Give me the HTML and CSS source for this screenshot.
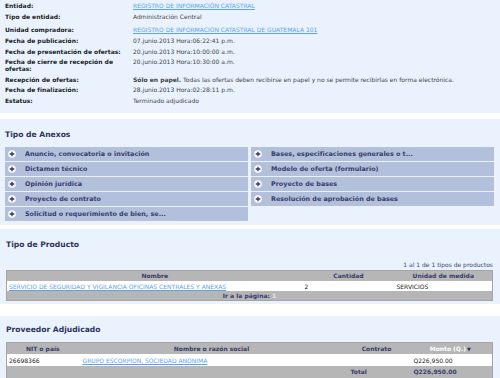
FILE: index.html
```html
<!DOCTYPE html>
<html lang="es">
<head>
    <meta charset="UTF-8">
    <title>Concurso</title>
    <link rel="stylesheet" href="styles.css">
</head>
<body>
    <div class="panel panel-ficha">
        <div class="ficha">
            <div class="lbl">Entidad:</div>
            <div class="val"><a href="#">REGISTRO DE INFORMACIÓN CATASTRAL</a></div>
            <div class="lbl">Tipo de entidad:</div>
            <div class="val">Administración Central</div>
            <div class="lbl alto">Unidad compradora:</div>
            <div class="val alto"><a href="#">REGISTRO DE INFORMACION CATASTRAL DE GUATEMALA 101</a></div>
            <div class="lbl">Fecha de publicación:</div>
            <div class="val">07.junio.2013 Hora:06:22:41 p.m.</div>
            <div class="lbl">Fecha de presentación de ofertas:</div>
            <div class="val">20.junio.2013 Hora:10:00:00 a.m.</div>
            <div class="lbl">Fecha de cierre de recepción de ofertas:</div>
            <div class="val">20.junio.2013 Hora:10:30:00 a.m.</div>
            <div class="lbl">Recepción de ofertas:</div>
            <div class="val"><b>Sólo en papel.</b> Todas las ofertas deben recibirse en papel y no se permite recibirlas en forma electrónica.</div>
            <div class="lbl">Fecha de finalización:</div>
            <div class="val">28.junio.2013 Hora:02:28:11 p.m.</div>
            <div class="lbl">Estatus:</div>
            <div class="val">Terminado adjudicado</div>
        </div>
    </div>

    <div class="panel panel-anexos">
        <h2>Tipo de Anexos</h2>
        <div class="anexos">
            <div class="anexos-col">
                <div class="anexo"><svg viewBox="0 0 8 8"><circle cx="4" cy="4" r="3.8"/><path d="M4 1.7v4.6M1.7 4h4.6"/></svg>Anuncio, convocatoria o invitación</div>
                <div class="anexo"><svg viewBox="0 0 8 8"><circle cx="4" cy="4" r="3.8"/><path d="M4 1.7v4.6M1.7 4h4.6"/></svg>Dictamen técnico</div>
                <div class="anexo"><svg viewBox="0 0 8 8"><circle cx="4" cy="4" r="3.8"/><path d="M4 1.7v4.6M1.7 4h4.6"/></svg>Opinión jurídica</div>
                <div class="anexo"><svg viewBox="0 0 8 8"><circle cx="4" cy="4" r="3.8"/><path d="M4 1.7v4.6M1.7 4h4.6"/></svg>Proyecto de contrato</div>
                <div class="anexo"><svg viewBox="0 0 8 8"><circle cx="4" cy="4" r="3.8"/><path d="M4 1.7v4.6M1.7 4h4.6"/></svg>Solicitud o requerimiento de bien, se...</div>
            </div>
            <div class="anexos-col">
                <div class="anexo"><svg viewBox="0 0 8 8"><circle cx="4" cy="4" r="3.8"/><path d="M4 1.7v4.6M1.7 4h4.6"/></svg>Bases, especificaciones generales o t...</div>
                <div class="anexo"><svg viewBox="0 0 8 8"><circle cx="4" cy="4" r="3.8"/><path d="M4 1.7v4.6M1.7 4h4.6"/></svg>Modelo de oferta (formulario)</div>
                <div class="anexo"><svg viewBox="0 0 8 8"><circle cx="4" cy="4" r="3.8"/><path d="M4 1.7v4.6M1.7 4h4.6"/></svg>Proyecto de bases</div>
                <div class="anexo"><svg viewBox="0 0 8 8"><circle cx="4" cy="4" r="3.8"/><path d="M4 1.7v4.6M1.7 4h4.6"/></svg>Resolución de aprobación de bases</div>
            </div>
        </div>
    </div>

    <div class="panel panel-producto">
        <h2>Tipo de Producto</h2>
        <div class="conteo">1 al 1 de 1 tipos de productos</div>
        <table class="grid grid-producto">
            <colgroup>
                <col style="width:296px">
                <col style="width:92px">
                <col>
            </colgroup>
            <tr class="head">
                <th>Nombre</th>
                <th>Cantidad</th>
                <th>Unidad de medida</th>
            </tr>
            <tr class="fila">
                <td><a href="#">SERVICIO DE SEGURIDAD Y VIGILANCIA OFICINAS CENTRALES Y ANEXAS</a></td>
                <td class="cant">2</td>
                <td class="unidad">SERVICIOS</td>
            </tr>
            <tr class="pie">
                <td colspan="3">Ir a la página: <span class="pag">1</span></td>
            </tr>
        </table>
    </div>

    <div class="panel panel-proveedor">
        <h2>Proveedor Adjudicado</h2>
        <table class="grid grid-proveedor">
            <colgroup>
                <col style="width:72px">
                <col style="width:266px">
                <col style="width:64px">
                <col>
            </colgroup>
            <tr class="head">
                <th>NIT o país</th>
                <th>Nombre o razón social</th>
                <th>Contrato</th>
                <th class="orden">Monto (Q.)<span class="flecha">▼</span></th>
            </tr>
            <tr class="fila">
                <td>26698366</td>
                <td class="razon"><a href="#">GRUPO ESCORPION, SOCIEDAD ANONIMA</a></td>
                <td></td>
                <td class="monto">Q226,950.00</td>
            </tr>
            <tr class="total">
                <td></td>
                <td></td>
                <td class="total-lbl">Total</td>
                <td class="monto">Q226,950.00</td>
            </tr>
        </table>
    </div>
</body>
</html>
```

FILE: styles.css
```css
body {
    margin: 0;
    background-color: #ffffff;
    font-family: "DejaVu Sans", Verdana, sans-serif;
    font-size: 6px;
    color: #222222;
}

a {
    color: #5aa3ea;
}

.panel {
    background-color: #e9f2fd;
}

h2 {
    margin: 0;
    font-size: 7.6px;
    color: #2e3560;
}

/* ficha del concurso */
.panel-ficha {
    padding: 3px 6px 8px 5px;
}

.ficha {
    display: grid;
    grid-template-columns: 128px 1fr;
    row-gap: 4.7px;
    line-height: 6.2px;
}

.lbl {
    font-weight: bold;
    color: #1d1d1d;
    padding-right: 8px;
}

.val {
    color: #444444;
}

.alto {
    padding-top: 2px;
}

/* anexos */
.panel-anexos {
    margin-top: 6px;
    padding: 11px 6px 4px 5px;
}

.anexos {
    display: grid;
    grid-template-columns: 1fr 1fr;
    column-gap: 3px;
    margin-top: 8px;
    align-items: start;
}

.anexos-col {
    display: flex;
    flex-direction: column;
    gap: 1px;
}

.anexo {
    display: flex;
    align-items: center;
    height: 14px;
    background-color: #b3c0db;
    color: #373c6b;
    font-weight: bold;
    font-size: 6.4px;
    padding-left: 3px;
}

.anexo svg {
    width: 8px;
    height: 8px;
    margin-right: 9px;
}

.anexo circle {
    fill: #ffffff;
}

.anexo path {
    stroke: #2e3560;
    stroke-width: 1.3;
}

/* tablas */
.panel-producto {
    margin-top: 4px;
    padding: 11px 7px 3px 6px;
}

.conteo {
    text-align: right;
    color: #3d4676;
    margin-top: 12px;
    margin-bottom: 2px;
}

.grid {
    width: 100%;
    border-collapse: collapse;
    border: 1px solid #a4a4a4;
    table-layout: fixed;
}

.grid th,
.grid td {
    padding: 0 2px;
    white-space: nowrap;
    overflow: hidden;
}

.grid .head {
    background-color: #b6b6b6;
    height: 11px;
}

.grid th {
    color: #373c6b;
    font-weight: bold;
    text-align: center;
}

.grid .fila {
    background-color: #ffffff;
    height: 10px;
}

.grid .pie,
.grid .total {
    background-color: #b6b6b6;
    height: 9px;
}

.pie td {
    text-align: center;
    color: #373c6b;
    font-weight: bold;
}

.pag {
    color: #e6e6e6;
}

.cant {
    text-align: left;
}

.unidad {
    padding-left: 6px;
}

.panel-proveedor {
    margin-top: 12px;
    padding: 9px 7px 0 6px;
}

.grid-proveedor {
    margin-top: 8px;
}

.grid-proveedor .head,
.grid-proveedor .fila,
.grid-proveedor .total {
    height: 12px;
}

.orden {
    color: #ffffff !important;
}

.flecha {
    color: #2e3560;
    font-size: 5px;
    margin-left: 1px;
}

.razon {
    padding-left: 2px !important;
}

.razon a {
    margin-left: 2px;
}

.monto {
    padding-left: 5px !important;
}

.total td {
    color: #373c6b;
    font-weight: bold;
}

.total-lbl {
    padding-left: 6px !important;
}
```
